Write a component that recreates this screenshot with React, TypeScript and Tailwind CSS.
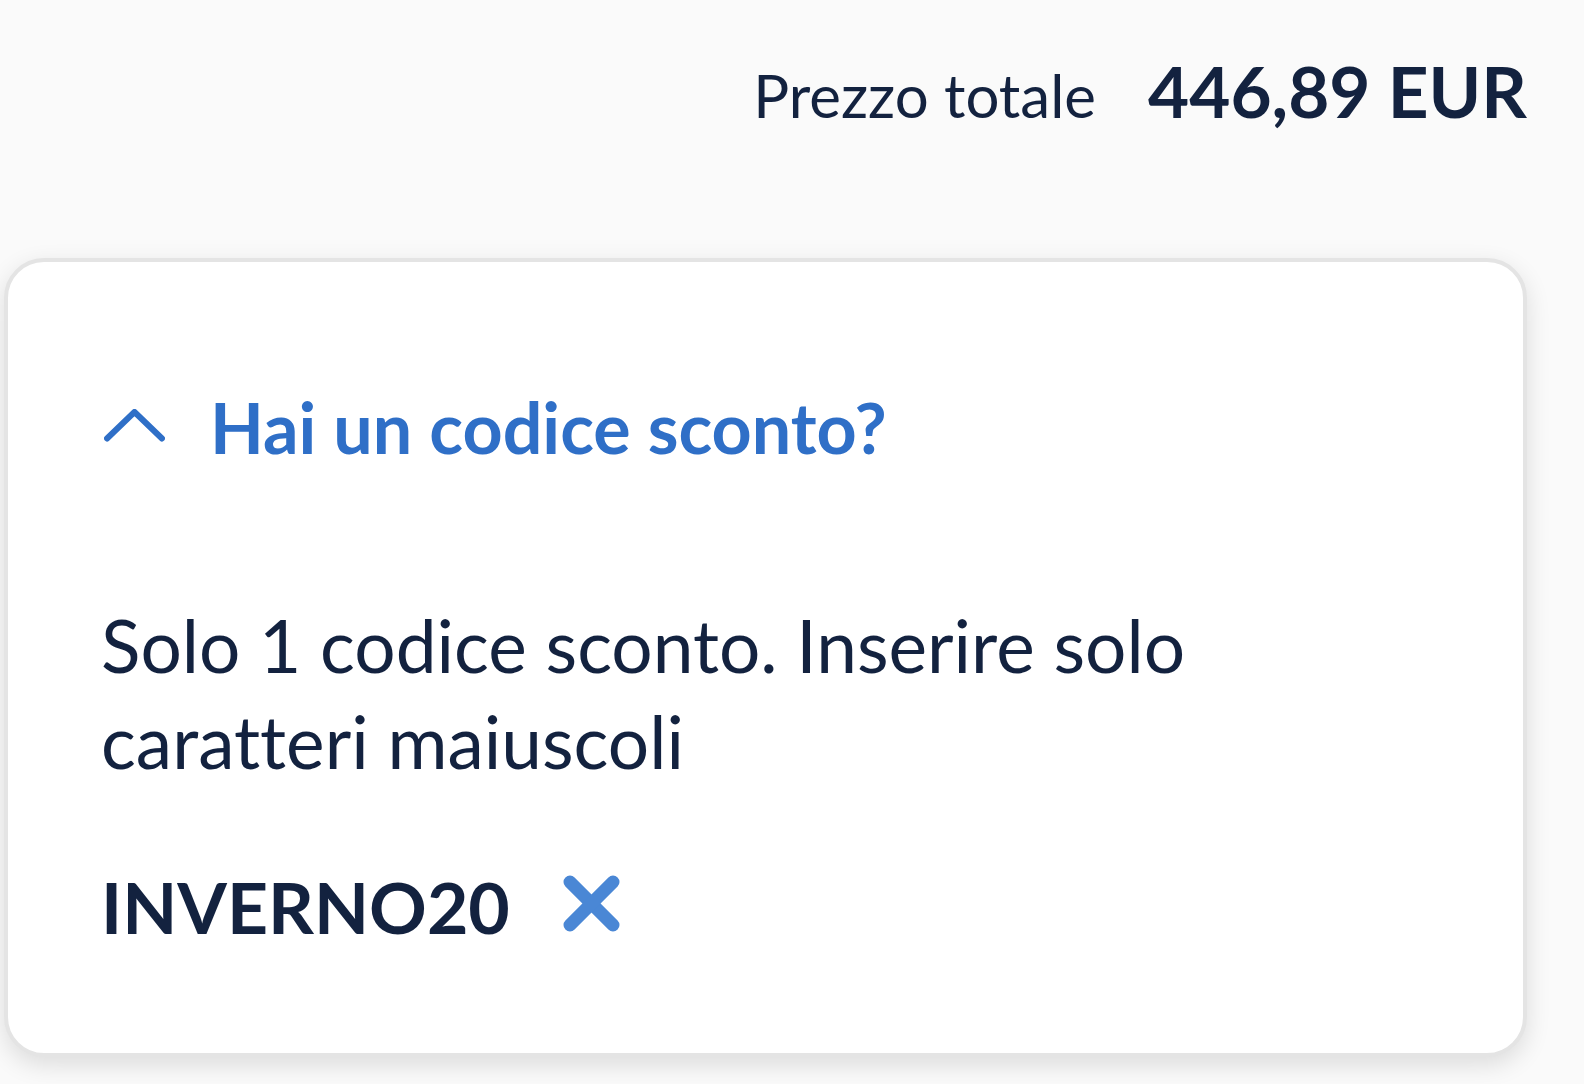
import React from "react";

export default function App() {
  return (
    <div
      className="min-h-[1084px] w-full bg-[#fafafa] overflow-hidden [font-variant-ligatures:none]"
      style={{ fontFamily: "Lato, 'Noto Sans', sans-serif" }}
    >
      <div className="ml-[4px] w-[1523px] pt-[55px]">
        <div className="flex items-baseline justify-end text-[#13223f]">
          <span className="text-[60px] leading-[60px] font-normal">Prezzo totale</span>
          <span className="ml-[52px] text-[71px] leading-[72px] font-bold">446,89 EUR</span>
        </div>

        <div className="mt-[131px] rounded-[40px] border-[4px] border-[#e4e4e4] bg-white shadow-[0_8px_24px_rgba(0,0,0,0.12)] pl-[93px] pr-[60px] pt-[129px] pb-[111px]">
          <button className="flex items-center text-[#2f6fc7]">
            <svg width="61" height="33" viewBox="0 0 61 33" fill="none" className="ml-[3px] mt-[-4px]">
              <polyline
                points="3,29.5 30.5,3 58,29.5"
                stroke="#2f6fc7"
                strokeWidth="6"
                strokeLinecap="round"
                strokeLinejoin="round"
              />
            </svg>
            <span className="ml-[45px] text-[70px] leading-[72px] font-bold">Hai un codice sconto?</span>
          </button>

          <p className="mt-[134px] text-[73px] leading-[96px] text-[#13223f] w-[1200px]">
            Solo 1 codice sconto. Inserire solo caratteri maiuscoli
          </p>

          <div className="mt-[81px] flex items-center">
            <span className="text-[71.5px] leading-[72px] font-bold text-[#13223f]">INVERNO20</span>
            <svg width="57" height="57" viewBox="0 0 57 57" fill="none" className="ml-[53px] mt-[-6px]">
              <line x1="7" y1="7" x2="50" y2="50" stroke="#4a87d5" strokeWidth="13" strokeLinecap="round" />
              <line x1="50" y1="7" x2="7" y2="50" stroke="#4a87d5" strokeWidth="13" strokeLinecap="round" />
            </svg>
          </div>
        </div>
      </div>
    </div>
  );
}
